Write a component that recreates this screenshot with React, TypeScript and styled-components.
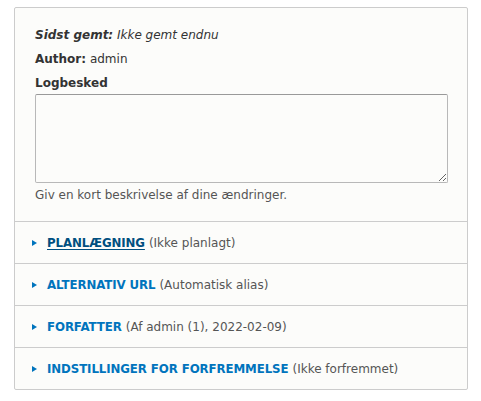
import styled, { createGlobalStyle } from "styled-components";

const GlobalStyle = createGlobalStyle`
  html, body {
    margin: 0;
    padding: 0;
    background: #ffffff;
  }
  body {
    font-family: "DejaVu Sans", "Liberation Sans", sans-serif;
    font-size: 12px;
    color: #333;
  }
`;

const sections = [
  { title: "Planlægning", summary: "(Ikke planlagt)", active: true },
  { title: "Alternativ URL", summary: "(Automatisk alias)" },
  { title: "Forfatter", summary: "(Af admin (1), 2022-02-09)" },
  { title: "Indstillinger for forfremmelse", summary: "(Ikke forfremmet)" },
];

export default function App() {
  return (
    <>
      <GlobalStyle />
      <Page>
        <Panel>
          <Meta>
            <MetaLine>
              <em>
                <strong>Sidst gemt:</strong> Ikke gemt endnu
              </em>
            </MetaLine>
            <MetaLine>
              <strong>Author:</strong> admin
            </MetaLine>
            <Label htmlFor="log">Logbesked</Label>
            <TextArea id="log" />
            <Description>Giv en kort beskrivelse af dine ændringer.</Description>
          </Meta>
          {sections.map((s) => (
            <Details key={s.title}>
              <Summary>
                <Arrow />
                <Title $active={s.active}>{s.title}</Title>
                <SummaryText>{s.summary}</SummaryText>
              </Summary>
            </Details>
          ))}
        </Panel>
      </Page>
    </>
  );
}

const Page = styled.div`
  padding: 7px 13px 12px 14px;
`;

const Panel = styled.div`
  width: 452px;
  border: 1px solid #ccc;
  border-radius: 2px;
  background: #fcfcfa;
`;

const Meta = styled.div`
  padding: 18px 19px 18px 20px;
  border-bottom: 1px solid #ccc;
`;

const MetaLine = styled.div`
  line-height: 18px;
  margin-bottom: 6px;
  color: #333;
`;

const Label = styled.label`
  display: block;
  font-weight: bold;
  line-height: 18px;
  margin-bottom: 2px;
`;

const TextArea = styled.textarea`
  display: block;
  box-sizing: border-box;
  width: 413px;
  height: 89px;
  margin: 0;
  border: 1px solid #b8b8b8;
  border-top-color: #999;
  border-radius: 2px;
  background: #fcfcfa;
  font: inherit;
`;

const Description = styled.div`
  margin-top: 4px;
  line-height: 16px;
  font-size: 12px;
  color: #555;
`;

const Details = styled.div`
  border-bottom: 1px solid #ccc;
  &:last-child {
    border-bottom: none;
  }
`;

const Summary = styled.div`
  display: flex;
  align-items: center;
  height: 41px;
  padding-left: 17px;
`;

const Arrow = styled.span`
  width: 0;
  height: 0;
  border-top: 3.5px solid transparent;
  border-bottom: 3.5px solid transparent;
  border-left: 5px solid #0074bd;
  margin-right: 10px;
`;

const Title = styled.a<{ $active?: boolean }>`
  font-weight: bold;
  font-size: 11.8px;
  letter-spacing: -0.1px;
  text-transform: uppercase;
  color: ${(p) => (p.$active ? "#004f80" : "#0074bd")};
  text-decoration: ${(p) => (p.$active ? "underline" : "none")};
  text-underline-offset: 2px;
  cursor: pointer;
`;

const SummaryText = styled.span`
  margin-left: 4px;
  color: #555;
`;
